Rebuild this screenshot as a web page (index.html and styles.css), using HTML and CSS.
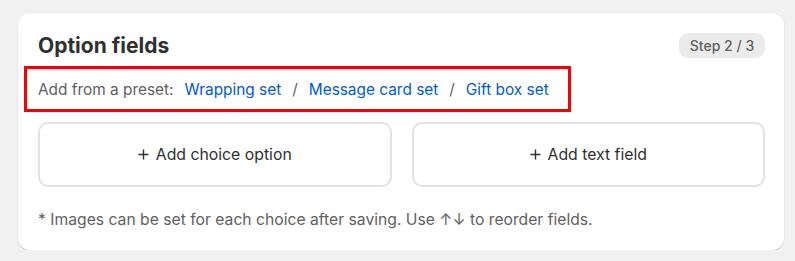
FILE: index.html
```html
<!DOCTYPE html>
<html>
<head>
<meta charset="utf-8">
<link rel="stylesheet" href="styles.css">
</head>
<body>
<div class="card">
  <div class="card-head">
    <h2 class="title">Option fields</h2>
    <span class="badge">Step 2 / 3</span>
  </div>
  <div class="preset">
    <span class="preset-label">Add from a preset:</span>
    <a class="preset-link" href="#">Wrapping set</a>
    <span class="sep">/</span>
    <a class="preset-link" href="#">Message card set</a>
    <span class="sep">/</span>
    <a class="preset-link" href="#">Gift box set</a>
  </div>
  <div class="actions">
    <button class="add-btn"><svg class="plus" width="11" height="11" viewBox="0 0 11 11"><path d="M5.5 0.5v10M0.5 5.5h10" stroke="#303030" stroke-width="1.4" fill="none"/></svg>Add choice option</button>
    <button class="add-btn"><svg class="plus" width="11" height="11" viewBox="0 0 11 11"><path d="M5.5 0.5v10M0.5 5.5h10" stroke="#303030" stroke-width="1.4" fill="none"/></svg>Add text field</button>
  </div>
  <p class="note">* Images can be set for each choice after saving. Use ↑↓ to reorder fields.</p>
</div>
</body>
</html>
```

FILE: styles.css
```css
* { box-sizing: border-box; }
html, body { margin: 0; padding: 0; }
body {
  background: #f1f1f1;
  font-family: Inter, "Noto Sans", sans-serif;
  color: #303030;
  padding: 13px 11px 0 18px;
}
.card {
  background: #ffffff;
  border-radius: 12px;
  box-shadow: 0 1px 0 rgba(0,0,0,0.13), 0 0 0 1px rgba(0,0,0,0.03);
  padding: 20px 19px 21px 20px;
  width: 766px;
}
.card-head {
  display: flex;
  justify-content: space-between;
  align-items: center;
  height: 24px;
}
.title {
  margin: 0;
  font-size: 21px;
  font-weight: 700;
  color: #303030;
}
.badge {
  background: #ebebeb;
  border-radius: 9px;
  font-size: 14px;
  font-weight: 500;
  color: #616161;
  height: 25px;
  width: 86px;
  display: flex;
  align-items: center;
  justify-content: center;
  margin-top: 1px;
}
.preset {
  display: flex;
  align-items: center;
  width: 547px;
  height: 46px;
  margin: 9px 0 10px -14px;
  padding-left: 11px;
  border: 3px solid #f80000;
  font-size: 15.4px;
}
.preset-label { color: #616161; margin-right: 11px; }
.preset-link { color: #005bd3; text-decoration: none; }
.sep { color: #616161; margin: 0 11px; }
.actions {
  display: grid;
  grid-template-columns: 1fr 1fr;
  gap: 20px;
}
.add-btn {
  height: 65px;
  display: flex;
  align-items: center;
  justify-content: center;
  gap: 7px;
  background: #ffffff;
  border: 2px solid #e3e3e3;
  border-radius: 10px;
  font-family: inherit;
  font-size: 15.8px;
  color: #303030;
  cursor: pointer;
}
.plus { flex: none; }
.note {
  margin: 23px 0 0 0;
  font-size: 15.7px;
  color: #616161;
}
```
